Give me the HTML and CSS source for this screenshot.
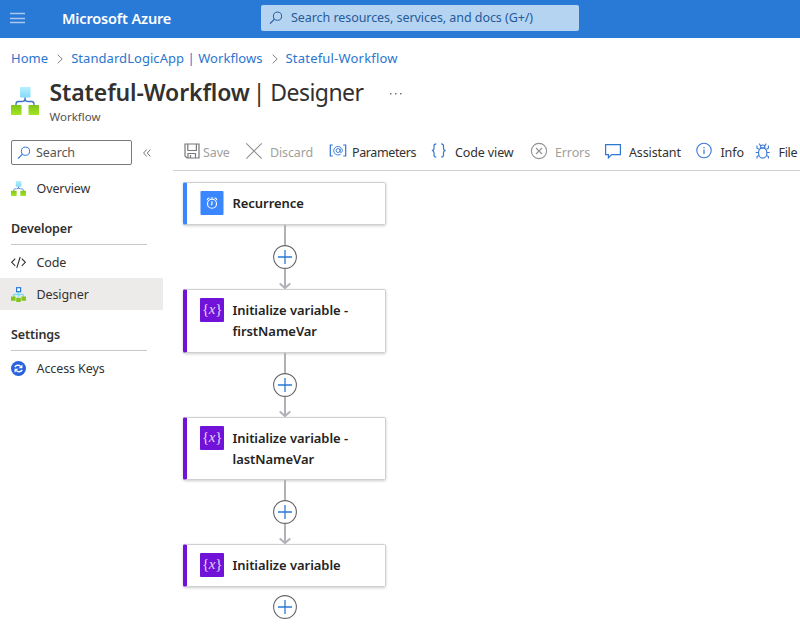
FILE: index.html
```
<!DOCTYPE html>
<html lang="en">
<head>
<meta charset="utf-8">
<title>Stateful-Workflow | Designer - Microsoft Azure</title>
<link rel="stylesheet" href="styles.css">
</head>
<body>
<svg width="0" height="0" class="defs" aria-hidden="true">
  <defs>
    <linearGradient id="cyan" x1="0" y1="0" x2="0" y2="1"><stop offset="0" stop-color="#b5f1ff"/><stop offset="1" stop-color="#86daf8"/></linearGradient>
    <linearGradient id="green" x1="0" y1="0" x2="0" y2="1"><stop offset="0" stop-color="#7fc51a"/><stop offset="1" stop-color="#a2e622"/></linearGradient>
    <symbol id="flow" viewBox="0 0 28 28"><path d="M14 10v4.500M5 19v-2q0-2.500 2.500-2.500h3q3.500 0 3.500-3 0 3 3.500 3h3q2.500 0 2.500 2.500v2" fill="none" stroke="#3d72c9" stroke-width="1.300"/><rect x="9" y="0" width="10.500" height="10.500" rx=".7" fill="url(#cyan)"/><rect x="0" y="18" width="10.500" height="10" rx=".7" fill="url(#green)"/><rect x="17.500" y="18" width="10.500" height="10" rx=".7" fill="url(#green)"/></symbol>
    <symbol id="search" viewBox="0 0 14 14"><circle cx="8.500" cy="5.200" r="4.100" fill="none" stroke="currentColor"/><path d="M5.500 8.200 1 12.700" stroke="currentColor" stroke-width="1.200"/></symbol>
    <symbol id="plus" viewBox="0 0 24 24"><circle cx="12" cy="12" r="11.400" fill="#fff" stroke="#66666a" stroke-width="1.100"/><path d="M12 5v14M5 12h14" stroke="#2a7ad8" stroke-width="1.300"/></symbol>
    <symbol id="line" viewBox="0 0 14 20"><path d="M7 0v20" stroke="#b1b1b7" stroke-width="2"/></symbol>
    <symbol id="arrow" viewBox="0 0 14 20"><path d="M7 0v18.500M1.700 14.500 7 19l5.300-4.500" fill="none" stroke="#b1b1b7" stroke-width="2"/></symbol>
  </defs>
</svg>

<header class="topbar">
  <svg class="menu" viewBox="0 0 15 11"><path d="M0 .500h15M0 5.500h15M0 9.500h15" stroke="#a9c9ef" stroke-width="1.300"/></svg>
  <span class="brand">Microsoft Azure</span>
  <div class="global-search"><svg><use href="#search"/></svg><span>Search resources, services, and docs (G+/)</span></div>
</header>

<nav class="breadcrumb">
  <a>Home</a><svg viewBox="0 0 6 10"><path d="m.700.700 4.500 4.300-4.500 4.300"/></svg>
  <a>StandardLogicApp | Workflows</a><svg viewBox="0 0 6 10"><path d="m.700.700 4.500 4.300-4.500 4.300"/></svg>
  <a class="current">Stateful-Workflow</a>
</nav>

<div class="heading">
  <svg class="heading-icon"><use href="#flow"/></svg>
  <div class="heading-text">
    <h1><b>Stateful-Workflow</b><span>| Designer</span></h1>
    <p>Workflow</p>
  </div>
  <svg class="more" viewBox="0 0 12 2"><path d="M0 0h1.500v1.500H0zM5 0h1.500v1.500H5zM10 0h1.500v1.500H10z" fill="#777"/></svg>
</div>

<div class="body">
  <aside class="sidebar">
    <div class="filter">
      <div class="filter-box"><svg><use href="#search"/></svg><span>Search</span></div>
      <svg class="collapse" viewBox="0 0 8 8"><path d="M3.700.500.600 4l3.100 3.500M7.400.500 4.300 4l3.100 3.500" fill="none" stroke="#666" stroke-width=".9"/></svg>
    </div>
    <a class="item overview"><svg><use href="#flow"/></svg><span>Overview</span></a>
    <h2>Developer</h2>
    <a class="item"><svg viewBox="0 0 15 15"><path d="M4.200 3.700.700 7.300l3.500 3.500M10.800 3.700l3.500 3.600-3.500 3.500M9.200 2 5.800 12.800" fill="none" stroke="#323130" stroke-width="1.100"/></svg><span>Code</span></a>
    <a class="item active"><svg viewBox="0 0 15 15"><path d="M7.500 5v5M2.500 10V8.300q0-.8.8-.8h8.400q.8 0 .8.800V10" fill="none" stroke="#7adcf5" stroke-width="1.300"/><rect x="5.600" y=".7" width="4" height="4" fill="#fff" stroke="#287bd5" stroke-width="1.200"/><path d="M0 9.500h4.600v4.200H0zM5.200 10.700h4.600V15H5.200zM10.400 9.500H15v4.200h-4.600z" fill="#83c51f"/></svg><span>Designer</span></a>
    <h2>Settings</h2>
    <a class="item"><svg viewBox="0 0 16 16"><circle cx="8" cy="8" r="8" fill="#2862dd"/><path d="M4 6.400Q6.500 3 10.300 5.600M12 9.600Q9.500 13 5.700 10.400" fill="none" stroke="#fff" stroke-width="1.500"/><path d="M12.200 3.600v4.200H8.100zM3.800 12.400V8.200h4.100z" fill="#fff"/></svg><span>Access Keys</span></a>
  </aside>

  <main class="designer">
    <div class="toolbar">
      <button class="off save"><svg viewBox="0 0 16 16"><path d="M1 1h14v14H3L1 13zM3.800 1v6.500h8.600V1M4 15v-4.500h7.500V15M6.500 12v3" fill="none" stroke="#78787a" stroke-width="1.200"/></svg><span>Save</span></button>
      <button class="off"><svg viewBox="0 0 16 16"><path d="m.300.300 15.400 15.400M15.700.300.300 15.700" stroke="#8f8f8f" stroke-width="1.100"/></svg><span>Discard</span></button>
      <button class="param"><svg viewBox="0 0 16 16"><path d="M2.800 2H.300v11h2.500M13.200 2h2.500v11h-2.500" fill="none" stroke="#2f75d2" stroke-width="1.200"/><path d="M10.800 11a4.300 4.300 0 1 1 1.500-3.500c0 2.500-2.200 2.600-2.200 1V5.600M10.100 7.500a2 2 0 1 1-4 0 2 2 0 0 1 4 0" fill="none" stroke="#2f75d2" stroke-width=".9"/></svg><span>Parameters</span></button>
      <button><svg viewBox="0 0 16 16"><path d="M5.300.800C3.300.800 3 1.500 3 3v2.300C3 6.700 2.300 7.500.800 7.500 2.300 7.500 3 8.300 3 9.700V12c0 1.500.300 2.200 2.300 2.200M10.200.800c2 0 2.300.700 2.300 2.200v2.300c0 1.400.700 2.200 2.200 2.200-1.500 0-2.200.8-2.200 2.200V12c0 1.500-.3 2.200-2.300 2.200" fill="none" stroke="#3979d5" stroke-width="1.200"/></svg><span>Code view</span></button>
      <button class="off"><svg viewBox="0 0 16 16"><circle cx="8" cy="8" r="7.600" fill="none" stroke="#929292" stroke-width="1.100"/><path d="m5 5 6 6M11 5l-6 6" stroke="#929292" stroke-width="1.100"/></svg><span>Errors</span></button>
      <button><svg viewBox="0 0 16 16"><path d="M.600 1.600h14.800v10H6.800L3.400 14.800v-3.200H.600z" fill="none" stroke="#2f75d2" stroke-width="1.200"/></svg><span>Assistant</span></button>
      <button class="info"><svg viewBox="0 0 16 16"><circle cx="8" cy="7.500" r="7.200" fill="none" stroke="#3979d5" stroke-width="1.100"/><path d="M8 6.500v4.500M8 4v1.300" stroke="#3979d5" stroke-width="1.200"/></svg><span>Info</span></button>
      <button class="file"><svg viewBox="0 0 16 16"><path d="M5.700 4.800V3q0-1 2-1t2 1v1.800M4.700 5h6M5.700 3 4.200.600M9.700 3l1.500-2.400M4 6.300 2 5.200V2.500M11.400 6.300l2-1.100V2.500M3.300 9.500H.700M12.100 9.500h2.600M4 12.500l-2 1v2M11.400 12.500l2 1v2" fill="none" stroke="#3979d5" stroke-width="1.100"/><ellipse cx="7.700" cy="10" rx="4.200" ry="5.200" fill="none" stroke="#3979d5" stroke-width="1.200"/></svg><span>File</span></button>
    </div>

    <div class="canvas">
      <section class="node trigger"><svg class="badge" viewBox="0 0 24 25"><rect width="24" height="25" rx="1" fill="#3a86ff"/><g fill="none" stroke="#fff"><circle cx="12" cy="13.300" r="4.700" stroke-width="1.200"/><path d="M12 10.700v2.800l-1 1.200M7.200 9.600Q7 7.300 9.400 7.300M16.800 9.600q.2-2.300-2.200-2.300M10.800 7.300h2.400" stroke-width="1.200"/></g></svg><span>Recurrence</span></section>
      <div class="edge"><svg class="seg"><use href="#line"/></svg><svg class="add"><use href="#plus"/></svg><svg class="seg"><use href="#arrow"/></svg></div>
      <section class="node tall first"><i class="badge">{<em>x</em>}</i><span>Initialize variable - firstNameVar</span></section>
      <div class="edge"><svg class="seg"><use href="#line"/></svg><svg class="add"><use href="#plus"/></svg><svg class="seg"><use href="#arrow"/></svg></div>
      <section class="node tall"><i class="badge">{<em>x</em>}</i><span>Initialize variable - lastNameVar</span></section>
      <div class="edge"><svg class="seg"><use href="#line"/></svg><svg class="add"><use href="#plus"/></svg><svg class="seg"><use href="#arrow"/></svg></div>
      <section class="node"><i class="badge">{<em>x</em>}</i><span>Initialize variable</span></section>
      <div class="edge last"><svg class="add"><use href="#plus"/></svg></div>
    </div>
  </main>
</div>
</body>
</html>
```
FILE: styles.css
```
* { box-sizing: border-box; }
body {
  margin: 0;
  height: 630px;
  overflow: hidden;
  background: #fff;
  color: #323130;
  font: 12.5px/20px "Noto Sans", "Open Sans", sans-serif;
}
svg { display: block; flex: none; overflow: visible; }
h1, h2, p { margin: 0; }

.topbar { height: 38px; display: flex; align-items: center; background: #2979d7; }
.menu { width: 15px; height: 11px; margin: -2px 0 0 10px; }
.brand { width: 199px; margin: -2px 0 0 37px; color: #fff; font-size: 14.5px; font-weight: 600; letter-spacing: -.15px; white-space: nowrap; }
.global-search {
  width: 318px; height: 26px; margin-top: -2px; padding-left: 8px;
  display: flex; align-items: center; gap: 8px;
  background: #b5d4f2; border-radius: 2px; color: #265a99;
  letter-spacing: -.06px; white-space: nowrap;
}
.global-search svg { width: 14px; height: 14px; }

.breadcrumb { height: 40px; padding-left: 11px; display: flex; align-items: center; font-size: 13px; letter-spacing: .05px; color: #2b76cf; white-space: nowrap; }
.breadcrumb svg { width: 6px; height: 10px; margin: 2px 8px 0 9px; fill: none; stroke: #858585; }
.breadcrumb .current { letter-spacing: .2px; }

.heading { height: 52px; padding-left: 11px; display: flex; }
.heading-icon { width: 28px; height: 28px; margin-top: 9px; }
.heading-text { width: 329px; margin: -1px 0 0 10.5px; }
.heading h1 { display: flex; gap: 3px; font-size: 23px; line-height: 30px; font-weight: 400; white-space: nowrap; }
.heading b { font-weight: 600; letter-spacing: -.12px; }
.heading h1 span { letter-spacing: -.55px; }
.heading p { margin-top: 1px; font-size: 11.5px; line-height: 18px; color: #55534f; }
.heading .more { width: 12px; height: 2px; margin: 15px 0 0 11px; }

.body { display: flex; height: 500px; }
.sidebar { width: 163px; padding-top: 10px; letter-spacing: -.1px; }
.filter { display: flex; align-items: center; padding-left: 11px; }
.filter-box { width: 121px; height: 25px; padding-left: 5px; display: flex; align-items: center; gap: 5px; border: 1px solid #7b7977; border-radius: 2px; color: #55534f; }
.filter-box svg { width: 14px; height: 14px; color: #2f75d2; }
.collapse { width: 8px; height: 8px; margin-left: 11px; }
.item { height: 32px; padding-left: 11px; display: flex; align-items: center; gap: 10.5px; }
.item svg { width: 15px; height: 15px; }
.item span { margin-top: 2px; }
.overview { margin-top: 8px; height: 31px; }
.overview span { margin-top: 0; }
.active { background: #edebe9; }
.sidebar h2 { width: 136px; height: 33px; margin: 8px 0 1px 11px; padding-top: 7px; border-bottom: 1px solid #c8c8c8; font-size: 12.5px; line-height: 20px; font-weight: 600; }
.overview + h2 { height: 34px; margin-top: 7px; padding-top: 8px; }

.designer { flex: 1; min-width: 0; }
.toolbar {
  height: 41px; margin-left: 10px; padding: 10px 0 0 11px;
  display: grid; grid-template-columns: 62px 84px 101px 100px 74px 91px 59px 45px;
  border-bottom: 1px solid #d0d0d0;
}
.toolbar button { height: 25px; padding: 0; border: 0; background: none; display: flex; align-items: center; gap: 8px; color: #323130; font: inherit; white-space: nowrap; letter-spacing: -.12px; }
.toolbar svg { width: 16px; height: 16px; margin-top: -3px; }
.toolbar .save { gap: 3px; }
.toolbar .param { gap: 6px; letter-spacing: -.38px; }
.toolbar .info { gap: 8.5px; }
.toolbar .file { gap: 7.5px; letter-spacing: -.3px; }
.toolbar .off { color: #a19f9d; }

.canvas { width: 203px; margin: 11px 0 0 20px; display: flex; flex-direction: column; align-items: center; }
.node {
  width: 203px; min-height: 43px; padding: 9px 0 0 13px;
  display: flex; gap: 8.5px;
  border: 1px solid #d0d0d0; border-left: 4px solid #7012d8; border-radius: 2px;
  box-shadow: 0 1px 3px rgba(0, 0, 0, .2);
  color: #242322; font-size: 13px; line-height: 21px; font-weight: 600; letter-spacing: -.05px;
}
.node span { width: 130px; margin-top: 1px; }
.trigger { border-left-color: #3a86ff; }
.tall { min-height: 63px; }
.first { min-height: 63.5px; }
.badge { width: 24px; height: 24px; flex: none; margin-top: -1px; }
i.badge { background: #7012d8; border-radius: 1px; color: #e6d3fa; font: 15px/22px "Liberation Serif", serif; text-align: center; letter-spacing: -.3px; }
.edge { display: flex; flex-direction: column; align-items: center; }
.seg { width: 14px; height: 20px; }
.add { width: 24px; height: 24px; }
.last { margin-top: 8px; }
.defs { position: absolute; }
```
